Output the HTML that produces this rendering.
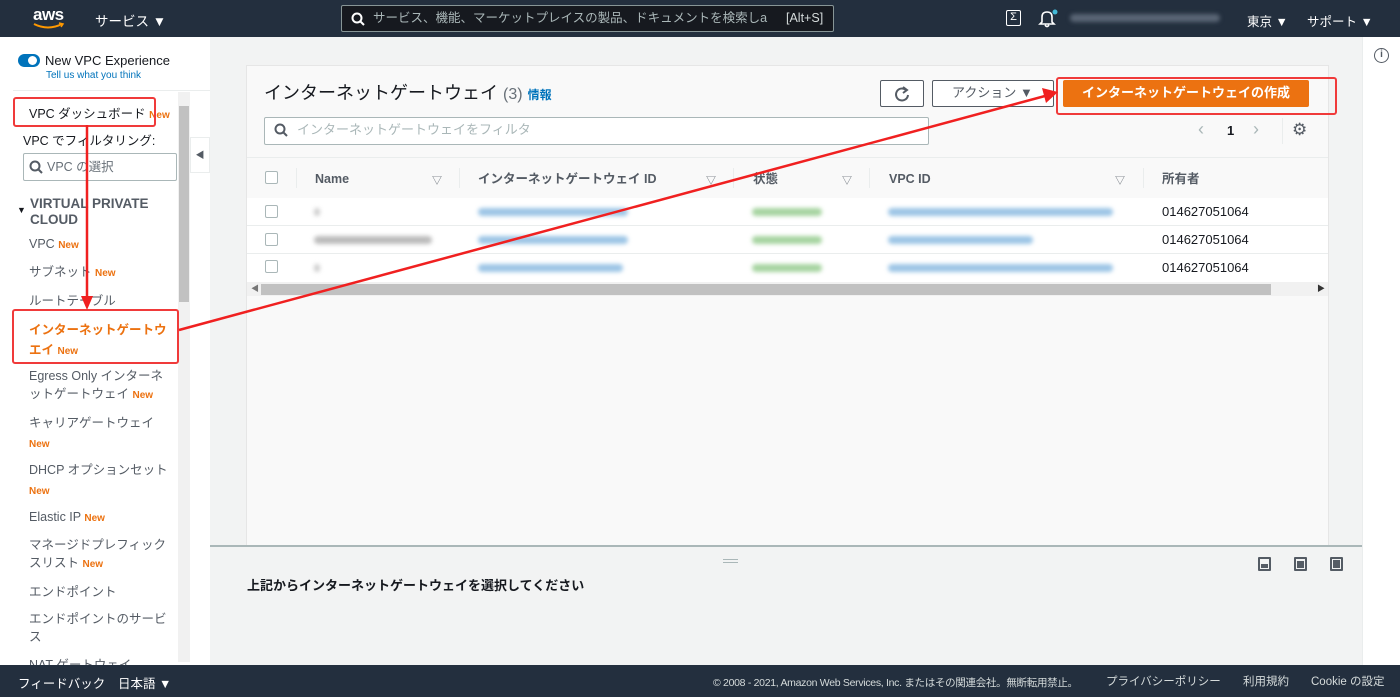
<!DOCTYPE html>
<html><head><meta charset="utf-8"><style>
*{margin:0;padding:0;box-sizing:border-box}
body{width:1400px;height:697px;overflow:hidden;position:relative;background:#f2f3f3;font-family:"Liberation Sans","Noto Sans CJK JP",sans-serif;color:#16191f}
.a{position:absolute;white-space:nowrap}
.nav{left:0;top:0;width:1400px;height:37px;background:#232f3e}
.w{color:#fff;font-size:13px}
.side{left:0;top:37px;width:210px;height:628px;background:#fff}
.si{position:absolute;left:29px;font-size:12.5px;color:#545b64;white-space:nowrap;line-height:18px}
.new{color:#ec7211;font-size:10px;font-weight:bold}
.panel{left:246px;top:65px;width:1083px;height:481px;background:#f9f9f9;border:1px solid #e6e6e6}
.cb{width:13px;height:13px;border:1px solid #aab7b8;background:#fff;border-radius:2px;position:absolute}
.blur{position:absolute;height:8px;border-radius:4px;filter:blur(2px)}
.foot{left:0;top:665px;width:1400px;height:32px;background:#232f3e}
.f{color:#d5dbdb;font-size:12px}
.th{line-height:18px;font-size:12.5px;font-weight:bold;color:#545b64;top:170px}
</style></head><body>
<div class="a nav"></div>
<div class="a" style="left:33px;top:5px;color:#fff;font-size:17px;font-weight:bold;letter-spacing:-0.5px">aws</div>
<svg class="a" style="left:32px;top:22px" width="34" height="8"><path d="M2 2 Q16 9 30 2" stroke="#ff9900" stroke-width="2" fill="none"/><path d="M27 1 L31 2 L29 5" stroke="#ff9900" stroke-width="1.5" fill="none"/></svg>
<div class="a w" style="left:95px;top:10px;font-size:13.5px">サービス ▼</div>
<div class="a" style="left:341px;top:5px;width:493px;height:27px;border:1px solid #879596;border-radius:2px;background:#16191f"></div>
<svg class="a" style="left:351px;top:12px" width="14" height="14"><circle cx="6" cy="6" r="4.5" stroke="#fff" stroke-width="2" fill="none"/><path d="M9 9 L13 13" stroke="#fff" stroke-width="2"/></svg>
<div class="a" style="left:373px;top:10px;color:#aab7b8;font-size:12.5px;width:404px;overflow:hidden;line-height:17px">サービス、機能、マーケットプレイスの製品、ドキュメントを検索しa</div>
<div class="a" style="left:786px;top:10px;color:#d5dbdb;font-size:12.5px;line-height:17px">[Alt+S]</div>
<div class="a" style="left:1006px;top:10px;width:15px;height:16px;border:1.5px solid #fff;border-radius:2px;color:#fff;font-size:11px;line-height:13px;text-align:center">Σ</div>
<svg class="a" style="left:1038px;top:8px" width="20" height="20"><path d="M4 14 L4 9 Q4 4 9 4 Q14 4 14 9 L14 14 L16 16 L2 16 Z M7 17 Q9 20 11 17" stroke="#fff" stroke-width="1.6" fill="none"/><circle cx="17" cy="4" r="2.5" fill="#44b9d6"/></svg>
<div class="a" style="left:1070px;top:14px;width:150px;height:8px;background:#5a6675;border-radius:4px;filter:blur(2px)"></div>
<div class="a w" style="left:1247px;top:11px;font-size:12.5px">東京 ▼</div>
<div class="a w" style="left:1307px;top:11px;font-size:12.5px">サポート ▼</div>

<div class="a side"></div>
<div class="a" style="left:18px;top:54px;width:22px;height:13px;border-radius:7px;background:#0073bb"></div>
<div class="a" style="left:28px;top:56px;width:9px;height:9px;border-radius:50%;background:#fff"></div>
<div class="a" style="left:45px;top:53px;font-size:13px;color:#16191f">New VPC Experience</div>
<div class="a" style="left:46px;top:70px;font-size:10px;color:#0073bb">Tell us what you think</div>
<div class="a" style="left:13px;top:90px;width:197px;height:1px;background:#eaeded"></div>
<div class="a" style="left:178px;top:92px;width:12px;height:570px;background:#f1f1f1"></div>
<div class="a" style="left:179px;top:106px;width:10px;height:196px;background:#c1c1c1"></div>
<div class="a" style="left:190px;top:137px;width:20px;height:36px;background:#fff;border:1px solid #eaeded;color:#545b64;font-size:9px;line-height:34px;text-align:center">◀</div>
<div class="si" style="top:105px;color:#16191f">VPC ダッシュボード <span class="new">New</span></div>
<div class="si" style="left:23px;top:132px;color:#16191f">VPC でフィルタリング:</div>
<div class="a" style="left:23px;top:153px;width:154px;height:28px;border:1px solid #aab7b8;border-radius:2px"></div>
<svg class="a" style="left:29px;top:160px" width="14" height="14"><circle cx="6" cy="6" r="4.5" stroke="#545b64" stroke-width="2" fill="none"/><path d="M9 9 L13 13" stroke="#545b64" stroke-width="2"/></svg>
<div class="a" style="left:47px;top:158px;font-size:12.5px;color:#687078;line-height:18px">VPC の選択</div>
<div class="a" style="left:17px;top:205px;font-size:9px;color:#16191f">▼</div>
<div class="a" style="left:30px;top:196px;font-size:13.5px;font-weight:bold;color:#545b64;line-height:16px">VIRTUAL PRIVATE<br>CLOUD</div>
<div class="si" style="top:235px">VPC <span class="new">New</span></div>
<div class="si" style="top:263px">サブネット <span class="new">New</span></div>
<div class="si" style="top:292px">ルートテーブル</div>
<div class="si" style="top:320px;color:#ec7211;font-weight:bold;line-height:20px">インターネットゲートウ<br>エイ <span class="new">New</span></div>
<div class="si" style="top:367px;line-height:18px">Egress Only インターネ<br>ットゲートウェイ <span class="new">New</span></div>
<div class="si" style="top:413px;line-height:20px">キャリアゲートウェイ<br><span class="new">New</span></div>
<div class="si" style="top:460px;line-height:20px">DHCP オプションセット<br><span class="new">New</span></div>
<div class="si" style="top:508px">Elastic IP <span class="new">New</span></div>
<div class="si" style="top:536px;line-height:18px">マネージドプレフィック<br>スリスト <span class="new">New</span></div>
<div class="si" style="top:583px">エンドポイント</div>
<div class="si" style="top:610px;line-height:18px">エンドポイントのサービ<br>ス</div>
<div class="si" style="top:656px">NAT ゲートウェイ</div>
<div class="a" style="left:13px;top:97px;width:143px;height:30px;border:2px solid #f03a3a;border-radius:3px"></div>
<div class="a" style="left:12px;top:309px;width:167px;height:55px;border:2px solid #f03a3a;border-radius:3px"></div>

<div class="a" style="left:1362px;top:37px;width:38px;height:628px;background:#fff;border-left:1px solid #eaeded"></div>
<div class="a" style="left:1374px;top:48px;width:15px;height:15px;border:1.5px solid #545b64;border-radius:50%;font-size:10px;font-weight:bold;text-align:center;line-height:12px;color:#545b64">i</div>

<div class="a panel"></div>
<div class="a" style="left:264px;top:82px;font-size:18px;color:#16191f;line-height:22px">インターネットゲートウェイ <span style="color:#687078;font-size:16px">(3)</span> <span style="color:#0073bb;font-size:12px;font-weight:bold">情報</span></div>
<div class="a" style="left:880px;top:80px;width:44px;height:27px;border:1px solid #545b64;background:#fff;border-radius:2px"></div>
<svg class="a" style="left:893px;top:85px" width="18" height="18"><path d="M13 5 A6 6 0 1 0 15 10" stroke="#545b64" stroke-width="2" fill="none"/><path d="M10 2 L14 5 L10 8" stroke="#545b64" stroke-width="2" fill="none"/></svg>
<div class="a" style="left:932px;top:80px;width:122px;height:27px;border:1px solid #545b64;background:#fff;border-radius:2px;font-size:13px;color:#545b64;padding:0 0 0 19px;line-height:24px">アクション ▼</div>
<div class="a" style="left:1063px;top:80px;width:246px;height:27px;background:#ec7211;border-radius:2px;color:#fff;font-size:13px;font-weight:bold;text-align:center;line-height:25px">インターネットゲートウェイの作成</div>
<div class="a" style="left:1056px;top:77px;width:281px;height:38px;border:2px solid #f03a3a;border-radius:3px"></div>
<div class="a" style="left:264px;top:117px;width:665px;height:28px;border:1px solid #aab7b8;background:#fff;border-radius:2px"></div>
<svg class="a" style="left:274px;top:123px" width="14" height="14"><circle cx="6" cy="6" r="4.5" stroke="#545b64" stroke-width="2" fill="none"/><path d="M9 9 L13 13" stroke="#545b64" stroke-width="2"/></svg>
<div class="a" style="left:297px;top:121px;font-size:13px;color:#aab7b8;line-height:18px">インターネットゲートウェイをフィルタ</div>
<div class="a" style="left:1198px;top:119px;font-size:18px;color:#aab7b8">‹</div>
<div class="a" style="left:1227px;top:123px;font-size:13px;font-weight:bold">1</div>
<div class="a" style="left:1253px;top:119px;font-size:18px;color:#aab7b8">›</div>
<div class="a" style="left:1282px;top:118px;width:1px;height:26px;background:#eaeded"></div>
<div class="a" style="left:1292px;top:120px;font-size:17px;color:#545b64">⚙</div>
<div class="a" style="left:247px;top:157px;width:1081px;height:1px;background:#eaeded"></div>
<div class="cb" style="left:265px;top:171px"></div>
<div class="a" style="left:296px;top:168px;width:1px;height:20px;background:#eaeded"></div>
<div class="a th" style="left:315px">Name</div>
<div class="a" style="left:432px;top:172px;font-size:10px;color:#687078">▽</div>
<div class="a" style="left:459px;top:168px;width:1px;height:20px;background:#eaeded"></div>
<div class="a th" style="left:478px">インターネットゲートウェイ ID</div>
<div class="a" style="left:706px;top:172px;font-size:10px;color:#687078">▽</div>
<div class="a" style="left:733px;top:168px;width:1px;height:20px;background:#eaeded"></div>
<div class="a th" style="left:753px">状態</div>
<div class="a" style="left:842px;top:172px;font-size:10px;color:#687078">▽</div>
<div class="a" style="left:869px;top:168px;width:1px;height:20px;background:#eaeded"></div>
<div class="a th" style="left:889px">VPC ID</div>
<div class="a" style="left:1115px;top:172px;font-size:10px;color:#687078">▽</div>
<div class="a" style="left:1143px;top:168px;width:1px;height:20px;background:#eaeded"></div>
<div class="a th" style="left:1162px">所有者</div>
<div class="a" style="left:247px;top:198px;width:1081px;height:84px;background:#fff"></div>
<div class="a" style="left:247px;top:225px;width:1081px;height:1px;background:#eaeded"></div>
<div class="a" style="left:247px;top:253px;width:1081px;height:1px;background:#eaeded"></div>
<div class="cb" style="left:265px;top:205px"></div><div class="cb" style="left:265px;top:233px"></div><div class="cb" style="left:265px;top:260px"></div>
<div class="blur" style="left:314px;top:208px;width:6px;background:#ccc"></div>
<div class="blur" style="left:314px;top:236px;width:118px;background:#bbb"></div>
<div class="blur" style="left:314px;top:264px;width:6px;background:#ccc"></div>
<div class="blur" style="left:478px;top:208px;width:150px;background:#9cc5e6"></div>
<div class="blur" style="left:478px;top:236px;width:150px;background:#9cc5e6"></div>
<div class="blur" style="left:478px;top:264px;width:145px;background:#9cc5e6"></div>
<div class="blur" style="left:752px;top:208px;width:70px;background:#a6d4a0"></div>
<div class="blur" style="left:752px;top:236px;width:70px;background:#a6d4a0"></div>
<div class="blur" style="left:752px;top:264px;width:70px;background:#a6d4a0"></div>
<div class="blur" style="left:888px;top:208px;width:225px;background:#9cc5e6"></div>
<div class="blur" style="left:888px;top:236px;width:145px;background:#9cc5e6"></div>
<div class="blur" style="left:888px;top:264px;width:225px;background:#9cc5e6"></div>
<div class="a" style="left:1162px;top:204px;font-size:13px;color:#16191f">014627051064</div>
<div class="a" style="left:1162px;top:232px;font-size:13px;color:#16191f">014627051064</div>
<div class="a" style="left:1162px;top:260px;font-size:13px;color:#16191f">014627051064</div>
<div class="a" style="left:247px;top:282px;width:1081px;height:14px;background:#f1f1f1"></div>
<div class="a" style="left:261px;top:284px;width:1010px;height:11px;background:#c1c1c1"></div>
<div class="a" style="left:251px;top:283px;font-size:8px;color:#777">◀</div>
<div class="a" style="left:1317px;top:283px;font-size:8px;color:#333">▶</div>

<div class="a" style="left:210px;top:545px;width:1152px;height:2px;background:#aab7b8"></div>
<div class="a" style="left:723px;top:559px;width:15px;height:1px;background:#aab7b8"></div>
<div class="a" style="left:723px;top:562px;width:15px;height:1px;background:#aab7b8"></div>
<div class="a" style="left:247px;top:577px;font-size:13px;font-weight:bold;line-height:18px">上記からインターネットゲートウェイを選択してください</div>
<div class="a" style="left:1258px;top:557px;width:13px;height:14px;border:2px solid #545b64;border-radius:1px"><div style="position:absolute;left:1px;right:1px;bottom:1px;height:4px;background:#545b64"></div></div>
<div class="a" style="left:1294px;top:557px;width:13px;height:14px;border:2px solid #545b64;border-radius:1px"><div style="position:absolute;left:1px;right:1px;bottom:1px;height:7px;background:#545b64"></div></div>
<div class="a" style="left:1330px;top:557px;width:13px;height:14px;border:2px solid #545b64;border-radius:1px"><div style="position:absolute;left:1px;right:1px;bottom:1px;top:1px;background:#545b64"></div></div>

<div class="a foot"></div>
<div class="a f" style="left:18px;top:673px;font-size:12.5px;color:#fff">フィードバック</div>
<div class="a f" style="left:118px;top:673px;font-size:12.5px;color:#fff">日本語 ▼</div>
<div class="a f" style="left:713px;top:675px;font-size:10.5px;letter-spacing:-0.3px">© 2008 - 2021, Amazon Web Services, Inc. またはその関連会社。無断転用禁止。</div>
<div class="a f" style="left:1106px;top:673px;font-size:11.5px">プライバシーポリシー</div>
<div class="a f" style="left:1243px;top:673px;font-size:11.5px">利用規約</div>
<div class="a f" style="left:1311px;top:673px;font-size:11.5px">Cookie の設定</div>

<svg class="a" style="left:0;top:0" width="1400" height="697">
<line x1="87" y1="125" x2="87" y2="298" stroke="#f02020" stroke-width="2.5"/>
<path d="M81 296 L93 296 L87 310 Z" fill="#f02020"/>
<line x1="179" y1="330" x2="1045" y2="96" stroke="#f02020" stroke-width="2.5"/>
<path d="M1058 92 L1042 88 L1046 103 Z" fill="#f02020"/>
</svg>
</body></html>
